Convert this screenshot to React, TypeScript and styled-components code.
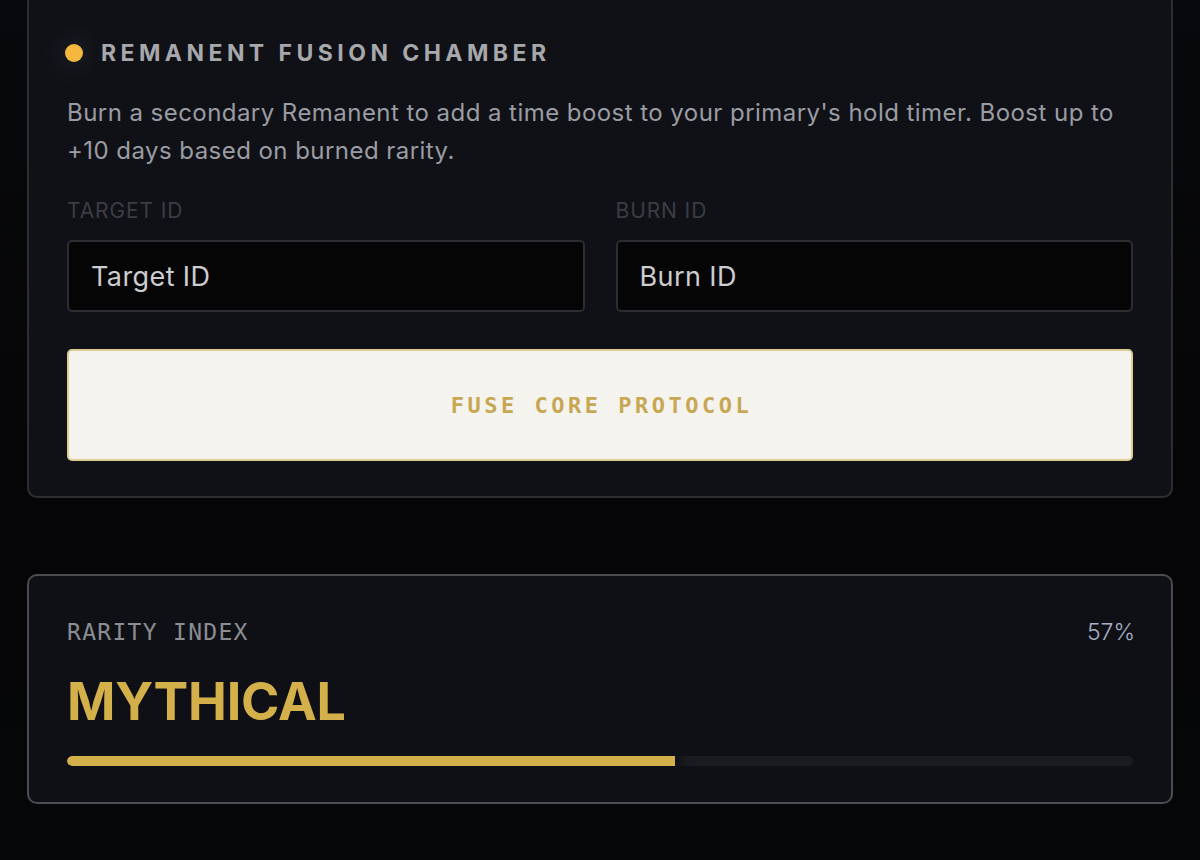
import React from "react";
import styled, { createGlobalStyle } from "styled-components";

const Global = createGlobalStyle`
  html, body { margin: 0; padding: 0; background: #060709; }
  body { font-family: Inter, "Noto Sans", sans-serif; }
  * { box-sizing: border-box; }
`;

const Page = styled.div`
  width: 1200px;
  height: 860px;
  overflow: hidden;
  padding: 0 27px 0 27px;
  background: linear-gradient(180deg, #08090c 0%, #050507 60%, #060709 100%);
  display: flex;
  flex-direction: column;
  gap: 76px;
`;

const Card = styled.section<{ $border: string }>`
  width: 1146px;
  background: #0f1015;
  border: 2px solid ${(p) => p.$border};
  border-radius: 10px;
  padding: 0 38px;
  display: flex;
  flex-direction: column;
`;

const FusionCard = styled(Card)`
  margin-top: -8px;
  padding-top: 44px;
  padding-bottom: 35px;
  background: #101116;
`;

const RarityCard = styled(Card)`
  padding-top: 44px;
  padding-bottom: 36px;
`;

const TitleRow = styled.div`
  display: flex;
  align-items: center;
  gap: 18px;
  height: 30px;
`;

const Dot = styled.span`
  width: 18px;
  height: 18px;
  border-radius: 50%;
  background: #f5b73e;
  margin-left: -2px;
  box-shadow: 0 0 24px 10px rgba(130, 145, 180, 0.08);
`;

const Title = styled.h2`
  margin: 0;
  font-family: Inter, sans-serif;
  font-weight: 700;
  font-size: 23px;
  letter-spacing: 4.45px;
  color: #a7a8ac;
`;

const Description = styled.p`
  margin: 26px 0 0;
  font-family: Inter, sans-serif;
  font-size: 24px;
  line-height: 38px;
  color: #9a9ca3;
  letter-spacing: 0.45px;
`;

const Fields = styled.div`
  margin-top: 29px;
  display: grid;
  grid-template-columns: 1fr 1fr;
  column-gap: 31px;
`;

const Field = styled.label`
  display: flex;
  flex-direction: column;
  gap: 17px;
`;

const FieldLabel = styled.span`
  font-family: Inter, sans-serif;
  font-size: 21px;
  line-height: 24px;
  color: #3b3d43;
  letter-spacing: 0.9px;
`;

const Input = styled.input`
  height: 72px;
  width: 100%;
  background: #050506;
  border: 2px solid #2b2d32;
  border-radius: 5px;
  padding: 0 22px;
  font-family: Inter, sans-serif;
  font-size: 27px;
  letter-spacing: 0.4px;
  color: #d0d0d3;
  outline: none;
  &::placeholder { color: #cdcdd0; }
`;

const FuseButton = styled.button`
  margin-top: 37px;
  height: 112px;
  width: 100%;
  background: #f5f3ee;
  border: 2px solid #dccd92;
  border-radius: 5px;
  font-family: "DejaVu Sans Mono", "Liberation Mono", monospace;
  font-weight: 700;
  font-size: 22px;
  letter-spacing: 3.5px;
  color: #c7a754;
  cursor: pointer;
  padding: 0 0 0 3px;
`;

const HeaderRow = styled.div`
  display: flex;
  justify-content: space-between;
  align-items: center;
  height: 24px;
`;

const MonoLabel = styled.span`
  font-family: "DejaVu Sans Mono", "Liberation Mono", monospace;
  font-size: 23px;
  font-weight: 400;
  letter-spacing: 1.3px;
  color: #8b8d93;
`;

const Percent = styled.span`
  font-family: Inter, sans-serif;
  font-size: 23px;
  font-weight: 300;
  color: #a7b0c6;
  margin-right: -2px;
`;

const Tier = styled.div`
  margin-top: 31px;
  font-family: Inter, sans-serif;
  font-weight: 700;
  font-size: 52px;
  line-height: 53px;
  letter-spacing: -0.2px;
  color: #d4b04b;
`;

const Track = styled.div`
  margin-top: 28px;
  height: 10px;
  border-radius: 5px;
  background: #1a1c20;
  overflow: hidden;
`;

const Fill = styled.div`
  height: 100%;
  background: #d4b04b;
  border-radius: 5px 0 0 5px;
  box-shadow: 6px 0 10px rgba(0, 0, 0, 0.6);
`;

export default function App() {
  const pct = 57;
  return (
    <>
      <Global />
      <Page>
        <FusionCard $border="#2c2e33">
          <TitleRow>
            <Dot />
            <Title>REMANENT FUSION CHAMBER</Title>
          </TitleRow>
          <Description>
            Burn a secondary Remanent to add a time boost to your primary's hold timer. Boost up to
            <br />
            +10 days based on burned rarity.
          </Description>
          <Fields>
            <Field>
              <FieldLabel>TARGET ID</FieldLabel>
              <Input placeholder="Target ID" />
            </Field>
            <Field>
              <FieldLabel>BURN ID</FieldLabel>
              <Input placeholder="Burn ID" />
            </Field>
          </Fields>
          <FuseButton>FUSE CORE PROTOCOL</FuseButton>
        </FusionCard>
        <RarityCard $border="#4a4c51">
          <HeaderRow>
            <MonoLabel>RARITY INDEX</MonoLabel>
            <Percent>{pct}%</Percent>
          </HeaderRow>
          <Tier>MYTHICAL</Tier>
          <Track>
            <Fill style={{ width: `${pct}%` }} />
          </Track>
        </RarityCard>
      </Page>
    </>
  );
}
